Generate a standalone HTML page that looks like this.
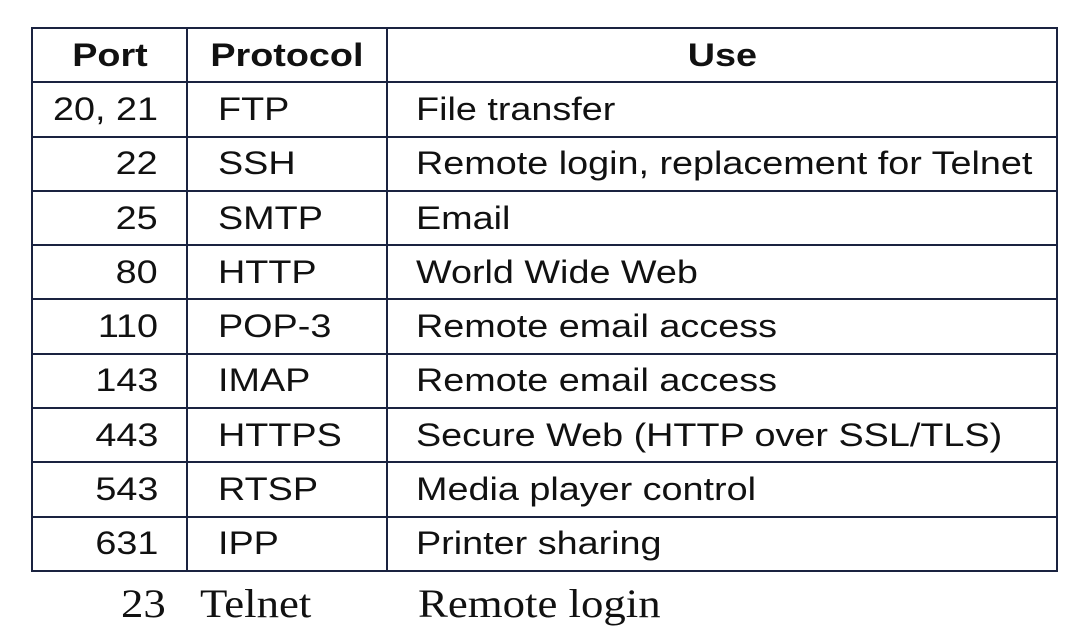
<!DOCTYPE html>
<html><head><style>
body{margin:0;background:#fff;width:1082px;height:640px;position:relative;overflow:hidden;font-family:"Liberation Sans",sans-serif;color:#111;}
table{position:absolute;left:31px;top:27px;border-collapse:collapse;}
td,th{border:2px solid #1a2340;height:52.3px;padding:0;font-size:32px;vertical-align:middle;white-space:nowrap;}
th{font-weight:bold;}
span{display:inline-block;transform:scaleX(1.18);transform-origin:left center;}
th span{transform-origin:center;}
td.p{text-align:right;padding-right:28px;}
td.p span{transform-origin:right center;}
td.q{padding-left:30px;}
td.u{padding-left:28px;}
.s{position:absolute;top:580px;font-family:"Liberation Serif",serif;font-size:40px;color:#111;transform:scaleX(1.12);transform-origin:left;}
</style></head><body>
<table>
<colgroup><col style="width:155px"><col style="width:200px"><col style="width:670px"></colgroup>
<tr><th><span>Port</span></th><th><span>Protocol</span></th><th><span>Use</span></th></tr>
<tr><td class="p"><span>20, 21</span></td><td class="q"><span>FTP</span></td><td class="u"><span>File transfer</span></td></tr>
<tr><td class="p"><span>22</span></td><td class="q"><span>SSH</span></td><td class="u"><span>Remote login, replacement for Telnet</span></td></tr>
<tr><td class="p"><span>25</span></td><td class="q"><span>SMTP</span></td><td class="u"><span>Email</span></td></tr>
<tr><td class="p"><span>80</span></td><td class="q"><span>HTTP</span></td><td class="u"><span>World Wide Web</span></td></tr>
<tr><td class="p"><span>110</span></td><td class="q"><span>POP-3</span></td><td class="u"><span>Remote email access</span></td></tr>
<tr><td class="p"><span>143</span></td><td class="q"><span>IMAP</span></td><td class="u"><span>Remote email access</span></td></tr>
<tr><td class="p"><span>443</span></td><td class="q"><span>HTTPS</span></td><td class="u"><span>Secure Web (HTTP over SSL/TLS)</span></td></tr>
<tr><td class="p"><span>543</span></td><td class="q"><span>RTSP</span></td><td class="u"><span>Media player control</span></td></tr>
<tr><td class="p"><span>631</span></td><td class="q"><span>IPP</span></td><td class="u"><span>Printer sharing</span></td></tr>
</table>
<div class="s" style="left:121px">23</div>
<div class="s" style="left:200px">Telnet</div>
<div class="s" style="left:418px">Remote login</div>
</body></html>
